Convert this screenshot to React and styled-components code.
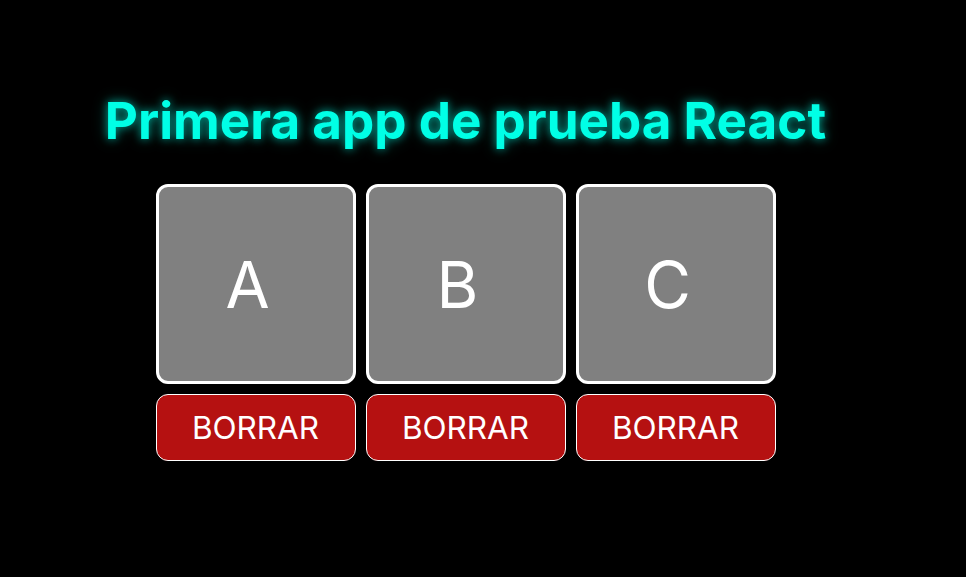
import React from 'react';
import styled, { createGlobalStyle } from 'styled-components';

const GlobalStyle = createGlobalStyle`
  html, body {
    margin: 0;
    background: #000;
    font-family: Inter, "Noto Sans", sans-serif;
  }
`;

const Page = styled.div`
  width: 931px;
  min-height: 577px;
  display: flex;
  flex-direction: column;
  align-items: center;
  padding-top: 90px;
  box-sizing: border-box;
`;

const Title = styled.h1`
  margin: 0 0 33px;
  font-size: 51.2px;
  font-weight: 700;
  line-height: 1.2;
  color: #00ffe6;
  text-shadow: 0 0 8px rgba(0, 255, 230, 0.55), 0 0 16px rgba(0, 255, 230, 0.3);
`;

const Grid = styled.div`
  display: flex;
  gap: 10px;
`;

const Column = styled.div`
  display: flex;
  flex-direction: column;
  gap: 10px;
`;

const Card = styled.div`
  width: 200px;
  height: 200px;
  box-sizing: border-box;
  border: 3px solid #fff;
  border-radius: 12px;
  background: #808080;
  color: #fff;
  display: flex;
  align-items: center;
  justify-content: center;
  padding-right: 16px;
  font-size: 64px;
  font-weight: 400;
`;

const DeleteButton = styled.button`
  width: 200px;
  height: 67px;
  box-sizing: border-box;
  border: 1px solid #fff;
  border-radius: 12px;
  background: #b51111;
  color: #fff;
  font-family: Inter, "Noto Sans", sans-serif;
  font-size: 31.5px;
  cursor: pointer;
`;

const letters = ['A', 'B', 'C'];

export default function App() {
  return (
    <>
      <GlobalStyle />
      <Page>
        <Title>Primera app de prueba React</Title>
        <Grid>
          {letters.map(l => (
            <Column key={l}>
              <Card>{l}</Card>
              <DeleteButton>BORRAR</DeleteButton>
            </Column>
          ))}
        </Grid>
      </Page>
    </>
  );
}
